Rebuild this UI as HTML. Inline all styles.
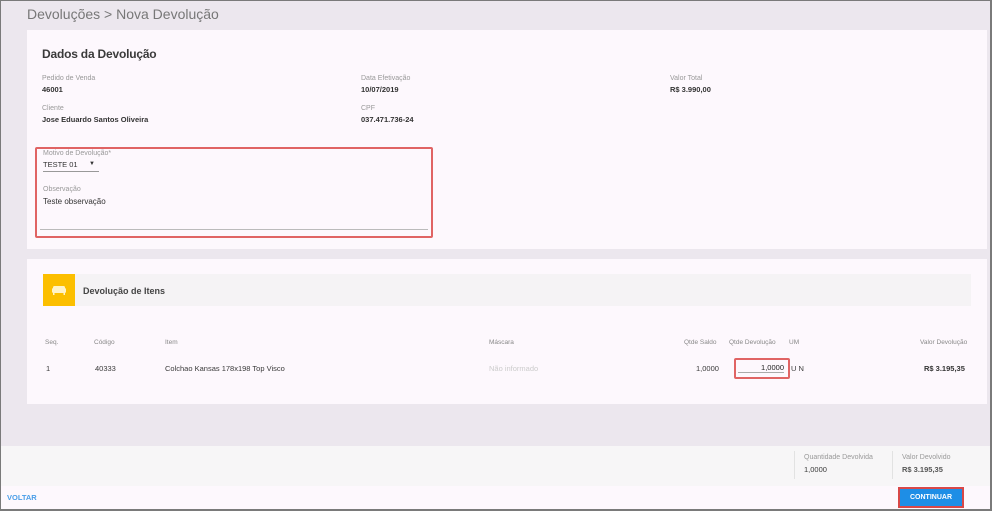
<!DOCTYPE html>
<html><head><meta charset="utf-8"><style>
*{margin:0;padding:0;box-sizing:border-box}
body{width:992px;height:511px;overflow:hidden;font-family:"Liberation Sans","DejaVu Sans",sans-serif;background:#fff}
#f{position:absolute;left:0;top:0;width:992px;height:511px;border:1px solid #7a7a7a;border-width:1px 2px 2px 1px;background:#ece7ee;overflow:hidden}
.a{position:absolute;white-space:nowrap}
.l{font-size:7px;color:#999}
.v{font-size:7.5px;color:#333;font-weight:bold}
.card{position:absolute;background:#fdf8fd}
.th{font-size:6.5px;color:#888}
.td{font-size:7.5px;color:#3a3a3a}
</style></head><body><div id="f">
<div class="a" style="left:26px;top:5px;font-size:14px;color:#777">Devoluções &gt; Nova Devolução</div>
<div class="card" style="left:26px;top:29px;width:960px;height:219px">
 <div class="a" style="left:15px;top:17px;font-size:12px;color:#3a3a3a;font-weight:bold;letter-spacing:-0.2px">Dados da Devolução</div>
 <div class="a l" style="left:15px;top:45px">Pedido de Venda</div>
 <div class="a v" style="left:15px;top:55px">46001</div>
 <div class="a l" style="left:334px;top:45px">Data Efetivação</div>
 <div class="a v" style="left:334px;top:55px">10/07/2019</div>
 <div class="a l" style="left:643px;top:45px">Valor Total</div>
 <div class="a v" style="left:643px;top:55px">R$ 3.990,00</div>
 <div class="a l" style="left:15px;top:75px">Cliente</div>
 <div class="a v" style="left:15px;top:85px">Jose Eduardo Santos Oliveira</div>
 <div class="a l" style="left:334px;top:75px">CPF</div>
 <div class="a v" style="left:334px;top:85px">037.471.736-24</div>
 <div class="a" style="left:8px;top:117px;width:398px;height:91px;border:2px solid #e06464;border-radius:2px"></div>
 <div class="a l" style="left:16px;top:120px">Motivo de Devolução*</div>
 <div class="a" style="left:16px;top:130px;width:56px;height:12px;border-bottom:1px solid #999;font-size:7.5px;color:#333">TESTE 01<span style="position:absolute;left:46px;top:1px;font-size:6px">▼</span></div>
 <div class="a l" style="left:16px;top:156px">Observação</div>
 <div class="a" style="left:16px;top:167px;font-size:8px;color:#333">Teste observação</div>
 <div class="a" style="left:13px;top:199px;width:388px;height:1px;background:#bbb"></div>
</div>
<div class="card" style="left:26px;top:258px;width:960px;height:145px">
 <div class="a" style="left:16px;top:15px;width:928px;height:32px;background:#f5f3f5"></div>
 <div class="a" style="left:16px;top:15px;width:32px;height:32px;background:#fcbf00">
  <svg width="32" height="32" style="position:absolute;left:0;top:0"><rect x="10" y="12" width="12" height="6" rx="1.5" fill="#fff3c8"/><rect x="9" y="14" width="14" height="5" rx="1.5" fill="#fff3c8"/><rect x="10" y="19" width="1.5" height="2" fill="#fff3c8"/><rect x="20.5" y="19" width="1.5" height="2" fill="#fff3c8"/></svg>
 </div>
 <div class="a" style="left:56px;top:27px;font-size:9px;color:#444;font-weight:bold">Devolução de Itens</div>
 <div class="a th" style="left:18px;top:80px">Seq.</div>
 <div class="a th" style="left:67px;top:80px">Código</div>
 <div class="a th" style="left:138px;top:80px">Item</div>
 <div class="a th" style="left:462px;top:80px">Máscara</div>
 <div class="a th" style="left:657px;top:80px">Qtde Saldo</div>
 <div class="a th" style="left:702px;top:80px">Qtde Devolução</div>
 <div class="a th" style="left:762px;top:80px">UM</div>
 <div class="a th" style="left:893px;top:80px">Valor Devolução</div>
 <div class="a td" style="left:19px;top:105px">1</div>
 <div class="a td" style="left:68px;top:105px">40333</div>
 <div class="a td" style="left:138px;top:105px">Colchao Kansas 178x198 Top Visco</div>
 <div class="a td" style="left:462px;top:105px;color:#ccc">Não informado</div>
 <div class="a td" style="left:669px;top:105px">1,0000</div>
 <div class="a" style="left:707px;top:99px;width:56px;height:21px;border:2px solid #e06464;border-radius:2px"></div>
 <div class="a td" style="left:711px;top:104px;width:46px;text-align:right;border-bottom:1px solid #aaa;color:#222">1,0000</div>
 <div class="a td" style="left:764px;top:105px">U N</div>
 <div class="a td" style="left:897px;top:105px;font-weight:bold;color:#333">R$ 3.195,35</div>
</div>
<div class="a" style="left:0;top:445px;width:992px;height:40px;background:#f7f6f7"></div>
<div class="a" style="left:793px;top:450px;width:1px;height:28px;background:#e2e2e2"></div>
<div class="a" style="left:891px;top:450px;width:1px;height:28px;background:#e2e2e2"></div>
<div class="a l" style="left:803px;top:453px">Quantidade Devolvida</div>
<div class="a td" style="left:803px;top:464px">1,0000</div>
<div class="a l" style="left:901px;top:453px">Valor Devolvido</div>
<div class="a v" style="left:901px;top:464px;color:#555">R$ 3.195,35</div>
<div class="a" style="left:0;top:485px;width:992px;height:26px;background:#fdf8fd"></div>
<div class="a" style="left:6px;top:492px;font-size:7.5px;font-weight:bold;color:#4a9ee8">VOLTAR</div>
<div class="a" style="left:897px;top:486px;width:66px;height:21px;border:2px solid #d84848;background:#1e8ee6;color:#fff;font-size:7px;font-weight:bold;text-align:center;line-height:17px">CONTINUAR</div>
</div></body></html>
